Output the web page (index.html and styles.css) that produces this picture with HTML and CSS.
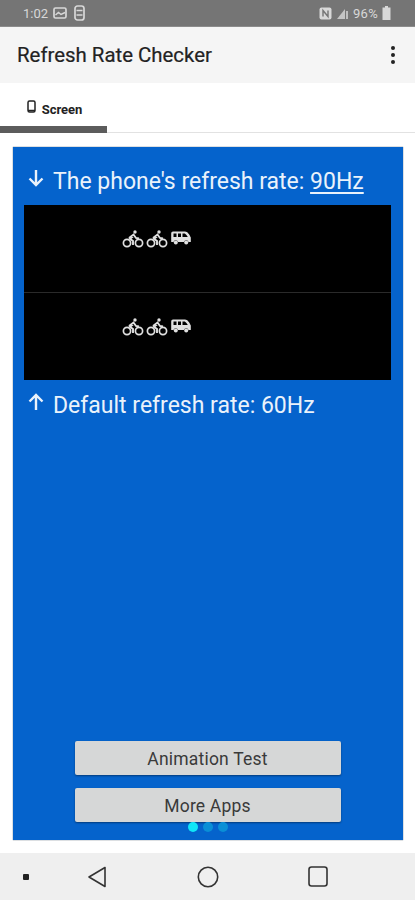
FILE: index.html
```html
<!DOCTYPE html>
<html lang="en">
<head>
<meta charset="utf-8">
<title>Refresh Rate Checker</title>
<link rel="stylesheet" href="styles.css">
</head>
<body>
<svg class="defs" width="0" height="0" aria-hidden="true">
  <symbol id="bike" viewBox="0 0 22 18">
    <circle cx="5" cy="13" r="3.6" fill="none" stroke="currentColor" stroke-width="1.700"/>
    <circle cx="17" cy="13" r="3.6" fill="none" stroke="currentColor" stroke-width="1.700"/>
    <circle cx="13" cy="2" r="1.700" fill="currentColor"/>
    <path d="M7 8 L11.500 4.500 L14 8 L17 8.500 M11 6.500 L8 8.800 L11 11 V15" fill="none" stroke="currentColor" stroke-width="1.900"/>
  </symbol>
  <symbol id="van" viewBox="0 0 20 14">
    <path fill-rule="evenodd" fill="currentColor" d="M2 .5 H14 C16.500 .5 18.500 3.500 19.800 6.500 V11 H17.500 A2.300 2.300 0 0 0 13 11 H7 A2.300 2.300 0 0 0 2.500 11 H.2 V2.500 C.2 1.200 1 .5 2 .5 Z M2.500 2.500 V6 H5.500 V2.500 Z M7 2.500 V6 H10 V2.500 Z M11.500 2.500 V6 H16.800 C16 4.500 15 3.200 13.800 2.500 Z"/>
    <circle cx="4.800" cy="11.500" r="2" fill="currentColor"/>
    <circle cx="15.200" cy="11.500" r="2" fill="currentColor"/>
  </symbol>
</svg>
<div class="phone">
  <header class="status">
    <div class="status-group">
      <span class="clock">1:02</span>
      <svg class="st-icon" width="14" height="12" viewBox="0 0 14 12"><rect x="1" y="1" width="12" height="10" rx="1.500" fill="none" stroke="currentColor" stroke-width="1.700"/><path d="M2.500 8 L5.500 5.500 L8 7.500 L12 5.500" fill="none" stroke="currentColor" stroke-width="1.400"/></svg>
      <svg class="st-icon st-sim" width="11" height="16" viewBox="0 0 11 16"><rect x="1" y="1" width="9" height="14" rx="2.500" fill="none" stroke="currentColor" stroke-width="1.700"/><path d="M2.500 5.500 H8.500 M2.500 10 H8.500" stroke="currentColor" stroke-width="1.500"/></svg>
    </div>
    <div class="status-group status-right">
      <svg class="st-icon" width="13" height="13" viewBox="0 0 13 13"><rect x=".5" y=".5" width="12" height="12" rx="2" fill="currentColor"/><path d="M4 9.500 V3.500 L9 9.500 V3.500" fill="none" stroke="#757575" stroke-width="1.400"/></svg>
      <svg class="st-icon st-signal" width="13" height="13" viewBox="0 0 13 13"><path d="M1 12 L9 2 V12 Z" fill="currentColor" opacity=".8"/><path d="M11 4 V12" stroke="currentColor" stroke-width="1.500"/></svg>
      <span class="pct">96%</span>
      <svg class="st-icon" width="9" height="14" viewBox="0 0 9 14"><path d="M3 0 H6 V1.500 H8.500 V14 H.5 V1.500 H3 Z" fill="currentColor"/></svg>
    </div>
  </header>

  <div class="appbar">
    <h1 class="title">Refresh Rate Checker</h1>
    <div class="menu"><i></i><i></i><i></i></div>
  </div>

  <nav class="tabs">
    <div class="tab">
      <svg class="tab-icon" width="9" height="13" viewBox="0 0 9 13"><rect x="1" y="1" width="7" height="11" rx="1.500" fill="none" stroke="currentColor" stroke-width="1.500"/><path d="M1 10.500 H8" stroke="currentColor" stroke-width="1.500"/></svg>
      <span>Screen</span>
    </div>
  </nav>

  <main class="content">
    <section class="panel">
      <div class="rate rate-top">
        <svg class="arrow" width="18" height="18" viewBox="0 0 18 18"><path d="M9 1 V16 M2.500 9.500 L9 16 L15.500 9.500" fill="none" stroke="currentColor" stroke-width="2.400"/></svg>
        <span>The phone's refresh rate: <u>90Hz</u></span>
      </div>
      <div class="screen">
        <div class="lane">
          <svg class="bike" width="22" height="18"><use href="#bike"/></svg>
          <svg class="bike" width="22" height="18"><use href="#bike"/></svg>
          <svg class="van" width="20" height="14"><use href="#van"/></svg>
        </div>
        <div class="lane lane-second">
          <svg class="bike" width="22" height="18"><use href="#bike"/></svg>
          <svg class="bike" width="22" height="18"><use href="#bike"/></svg>
          <svg class="van" width="20" height="14"><use href="#van"/></svg>
        </div>
      </div>
      <div class="rate rate-bottom">
        <svg class="arrow" width="18" height="18" viewBox="0 0 18 18"><path d="M9 17 V2 M2.500 8.500 L9 2 L15.500 8.500" fill="none" stroke="currentColor" stroke-width="2.400"/></svg>
        <span>Default refresh rate: 60Hz</span>
      </div>
      <div class="actions">
        <button class="btn">Animation Test</button>
        <button class="btn">More Apps</button>
      </div>
      <div class="dots"><i class="dot dot-on"></i><i class="dot"></i><i class="dot"></i></div>
    </section>
  </main>

  <footer class="navbar">
    <i class="nav-dot"></i>
    <svg class="nav-back" width="20" height="22" viewBox="0 0 20 22"><path d="M18 1.500 V20.500 L2 11 Z" fill="none" stroke="#333" stroke-width="1.600" stroke-linejoin="round"/></svg>
    <svg class="nav-home" width="22" height="22" viewBox="0 0 22 22"><circle cx="11" cy="11" r="9.700" fill="none" stroke="#333" stroke-width="1.600"/></svg>
    <svg class="nav-recent" width="20" height="21" viewBox="0 0 20 21"><rect x="1" y="1" width="18" height="19" rx="2.500" fill="none" stroke="#333" stroke-width="1.600"/></svg>
  </footer>
</div>
</body>
</html>
```
FILE: styles.css
```css
* { box-sizing: border-box; }
html, body { margin: 0; padding: 0; }
body { background: #fff; font-family: Roboto, "Liberation Sans", sans-serif; }
.defs { position: absolute; }
.phone { width: 415px; height: 900px; display: flex; flex-direction: column; overflow: hidden; }

.status { height: 27px; flex: none; background: #757575; border-bottom: 1px solid #8c8c8c; color: #d8d8d8; font-size: 13px; display: flex; justify-content: space-between; align-items: center; padding: 0 24px 0 23px; }
.status-group { display: flex; align-items: center; gap: 6px; }
.status-right { gap: 4px; }
.clock { margin-right: -1px; }
.st-sim { margin-left: 1px; }
.pct { letter-spacing: .3px; }
.st-icon { display: block; }

.appbar { height: 56px; flex: none; background: #f5f5f5; display: flex; align-items: center; justify-content: space-between; padding: 0 20px 0 17px; }
.title { margin: 0; font-size: 20.400px; font-weight: 400; color: #222; -webkit-text-stroke: .2px #222; }
.menu { display: flex; flex-direction: column; gap: 3px; }
.menu i { width: 4px; height: 4px; border-radius: 50%; background: #222; }

.tabs { height: 50px; flex: none; background: #fff; border-bottom: 1px solid #e2e2e2; padding-top: 4px; margin-bottom: 14px; }
.tab { width: 107px; height: 46px; border-bottom: 7px solid #5c5c5c; display: flex; align-items: flex-start; justify-content: center; gap: 6px; padding: 12px 0 0 2px; color: #222; font-size: 13px; font-weight: 700; }
.tab span { margin-top: 3px; }
.tab-icon { display: block; margin-top: 1px; }

.content { flex: 1; padding: 0 12px 13px 13px; min-height: 0; }
.panel { height: 693px; background: #0563cc; color: #eaf2fb; padding-top: 21px; display: flex; flex-direction: column; box-shadow: 0 0 1px #345; position: relative; }
.rate { display: flex; align-items: flex-start; gap: 8px; font-size: 23px; line-height: 27px; padding-left: 14px; }
.rate-top { height: 37px; }
.rate-bottom { height: 38px; margin-top: 12px; }
.rate u { text-underline-offset: 3px; text-decoration-thickness: 1.500px; }
.arrow { flex: none; margin-top: 1px; }

.screen { height: 175px; margin: 0 12px 0 11px; background: #000; color: #e0e0e0; display: flex; flex-direction: column; flex: none; }
.lane { height: 87px; display: flex; align-items: flex-start; gap: 2px; padding: 25px 0 0 98px; }
.lane-second { height: 88px; border-top: 1px solid #2a2a2a; }
.van { margin-top: 1px; margin-left: 1px; }

.actions { margin-top: auto; margin-bottom: 18px; display: flex; flex-direction: column; align-items: center; gap: 13px; padding-right: 1px; }
.btn { width: 266px; height: 34px; border: 0; border-radius: 2px; background: #d6d7d7; color: #3a3a3a; font: 400 17.500px Roboto, "Liberation Sans", sans-serif; letter-spacing: .2px; box-shadow: 0 1px 2px rgba(0,0,0,.4); padding: 2px 0 0; }
.dots { position: absolute; left: 175px; bottom: 8px; display: flex; gap: 5px; }
.dot { width: 10px; height: 10px; border-radius: 50%; background: #0a8fd6; }
.dot-on { background: #10e6f8; }

.navbar { height: 47px; flex: none; background: #efefef; position: relative; display: flex; align-items: center; padding-left: 23px; }
.nav-dot { width: 6px; height: 6px; background: #222; border-radius: 1px; }
.nav-back { margin-left: 58px; }
.nav-home { margin-left: 90px; }
.nav-recent { margin-left: 89px; }
```
